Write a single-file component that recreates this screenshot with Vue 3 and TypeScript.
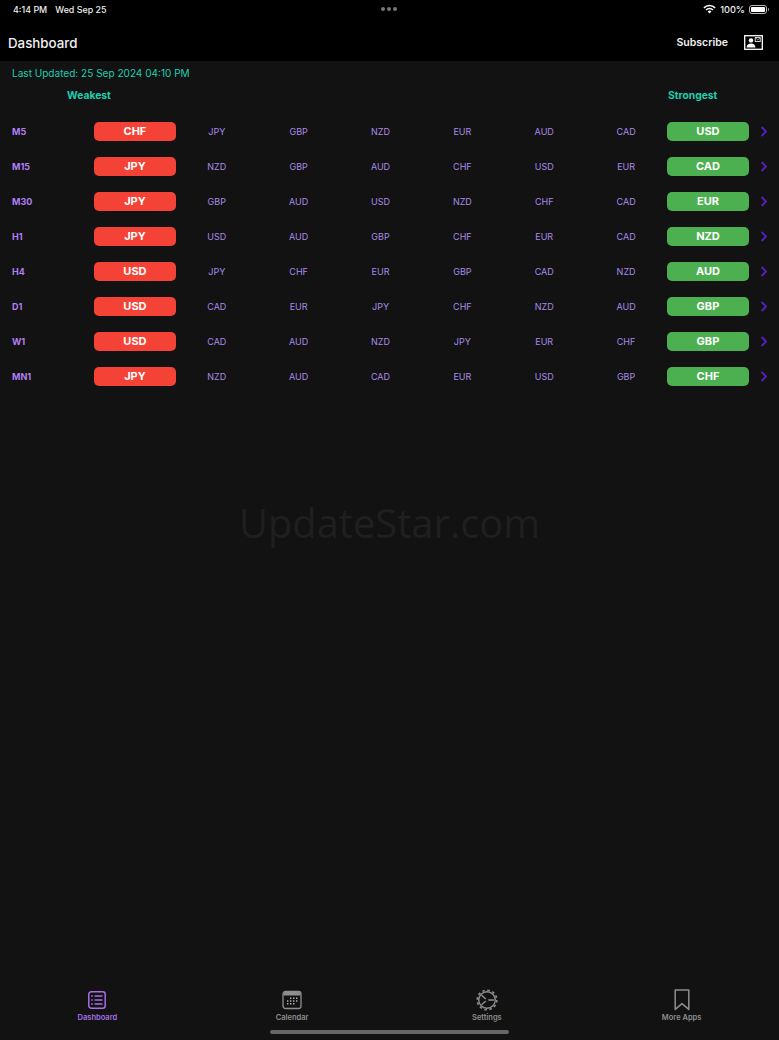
<template>
  <div class="page">
    <header class="top">
      <div class="status">
        <div class="status-left">
          <span>4:14 PM</span>
          <span>Wed Sep 25</span>
        </div>
        <div class="dots"><i></i><i></i><i></i></div>
        <div class="status-right">
          <svg class="wifi" width="13" height="10" viewBox="0 0 13 10">
            <path d="M.4 3.3a8.6 8.6 0 0 1 12.2 0l-1 1.1a7.1 7.1 0 0 0-10.2 0z" fill="#fff" />
            <path d="M2.5 5.4a5.6 5.6 0 0 1 8 0l-1 1.1a4.2 4.2 0 0 0-6 0z" fill="#fff" />
            <path d="M4.6 7.5a2.7 2.7 0 0 1 3.8 0L6.5 9.6z" fill="#fff" />
          </svg>
          <span>100%</span>
          <div class="battery"><b></b></div>
        </div>
      </div>
      <div class="nav">
        <h1>Dashboard</h1>
        <div class="nav-right">
          <span class="subscribe">Subscribe</span>
          <svg width="19" height="15" viewBox="0 0 19 15">
            <rect x=".7" y=".7" width="17.6" height="13.6" fill="none" stroke="#fff" stroke-width="1.3" />
            <circle cx="7" cy="5.4" r="2.2" fill="#fff" />
            <path d="M2.6 12.6c0-2.8 1.8-4 4.4-4s4.4 1.2 4.4 4z" fill="#fff" />
            <rect x="11.2" y="2.6" width="5" height="4" fill="none" stroke="#fff" stroke-width=".8" />
            <path d="M11.4 2.8l2.3 2.1 2.3-2.1" fill="none" stroke="#fff" stroke-width=".7" />
          </svg>
        </div>
      </div>
    </header>

    <main class="content">
      <p class="updated">Last Updated: 25 Sep 2024 04:10 PM</p>
      <div class="heads">
        <span class="head weakest">Weakest</span>
        <span class="head strongest">Strongest</span>
      </div>
      <div class="table">
        <div v-for="row in rows" :key="row.tf" class="row">
          <span class="tf">{{ row.tf }}</span>
          <span class="chip red">{{ row.list[0] }}</span>
          <span v-for="c in row.list.slice(1, 7)" :key="c" class="cur">{{ c }}</span>
          <span class="chip green">{{ row.list[7] }}</span>
          <svg class="arrow" width="8" height="11" viewBox="0 0 8 11">
            <path d="M1.6 1l4.4 4.5L1.6 10" fill="none" stroke="#5b1fc9" stroke-width="1.8" />
          </svg>
        </div>
      </div>
      <div class="watermark">UpdateStar.com</div>
    </main>

    <nav class="tabs">
      <div v-for="t in tabs" :key="t.label" class="tab" :class="{ active: t.active }">
        <svg v-if="t.icon === 'list'" width="20" height="20" viewBox="0 0 20 20">
          <rect x="1.8" y="1.8" width="16.4" height="16.4" rx="2.5" fill="none" stroke="currentColor" stroke-width="1.5" />
          <path d="M7.5 6h8M7.5 10h8M7.5 14h8" stroke="currentColor" stroke-width="1.7" />
          <path d="M4.2 6h1.6M4.2 10h1.6M4.2 14h1.6" stroke="currentColor" stroke-width="1.7" />
        </svg>
        <svg v-else-if="t.icon === 'cal'" width="20" height="20" viewBox="0 0 20 20">
          <rect x="1" y="1.5" width="18" height="17" rx="2.5" fill="none" stroke="currentColor" stroke-width="1.3" />
          <path d="M1.5 3.5a2 2 0 0 1 2-1.5h13a2 2 0 0 1 2 1.5v2h-17z" fill="currentColor" />
          <path d="M8 8.200h1.400M11 8.200h1.400M14 8.200h1.400M5 11h1.400M8 11h1.400M11 11h1.400M14 11h1.400M5 13.800h1.400M8 13.800h1.400M11 13.800h1.400" stroke="#b0b0b0" stroke-width="1.5" />
        </svg>
        <svg v-else-if="t.icon === 'gear'" width="22" height="22" viewBox="0 0 22 22">
          <circle cx="11" cy="11" r="8.300" fill="none" stroke="currentColor" stroke-width="1.4" />
          <circle cx="11" cy="11" r="9.800" fill="none" stroke="currentColor" stroke-width="1.600" stroke-dasharray="2.600 2.530" />
          <path d="M11 11L5.500 6.300M11 11L5.500 15.700M11 11h7" stroke="currentColor" stroke-width="1.500" />
          <path d="M9.400 9.700h2.200l1.100 1.300-1.100 1.300H9.400z" fill="#121212" />
        </svg>
        <svg v-else width="16" height="22" viewBox="0 0 16 22">
          <path d="M1.200 1h13.600v19.400L8 14.600l-6.800 5.800z" fill="none" stroke="currentColor" stroke-width="1.5" stroke-linejoin="round" />
        </svg>
        <span>{{ t.label }}</span>
      </div>
      <div class="home"></div>
    </nav>
  </div>
</template>

<script setup lang="ts">
interface Row { tf: string; list: string[] }
interface Tab { label: string; icon: string; active?: boolean }

const rows: Row[] = [
  { tf: 'M5', list: ['CHF', 'JPY', 'GBP', 'NZD', 'EUR', 'AUD', 'CAD', 'USD'] },
  { tf: 'M15', list: ['JPY', 'NZD', 'GBP', 'AUD', 'CHF', 'USD', 'EUR', 'CAD'] },
  { tf: 'M30', list: ['JPY', 'GBP', 'AUD', 'USD', 'NZD', 'CHF', 'CAD', 'EUR'] },
  { tf: 'H1', list: ['JPY', 'USD', 'AUD', 'GBP', 'CHF', 'EUR', 'CAD', 'NZD'] },
  { tf: 'H4', list: ['USD', 'JPY', 'CHF', 'EUR', 'GBP', 'CAD', 'NZD', 'AUD'] },
  { tf: 'D1', list: ['USD', 'CAD', 'EUR', 'JPY', 'CHF', 'NZD', 'AUD', 'GBP'] },
  { tf: 'W1', list: ['USD', 'CAD', 'AUD', 'NZD', 'JPY', 'EUR', 'CHF', 'GBP'] },
  { tf: 'MN1', list: ['JPY', 'NZD', 'AUD', 'CAD', 'EUR', 'USD', 'GBP', 'CHF'] },
]

const tabs: Tab[] = [
  { label: 'Dashboard', icon: 'list', active: true },
  { label: 'Calendar', icon: 'cal' },
  { label: 'Settings', icon: 'gear' },
  { label: 'More Apps', icon: 'mark' },
]
</script>

<style>
html, body { margin: 0; background: #121212; }
</style>

<style scoped>
.page {
  display: flex;
  flex-direction: column;
  width: 779px;
  height: 1040px;
  overflow: hidden;
  background: #121212;
  font-family: Inter, "Liberation Sans", sans-serif;
  color: #fff;
}

.top { height: 61px; background: #000; }
.status {
  display: flex; align-items: center; justify-content: space-between;
  position: relative;
  height: 18px;
  padding: 0 11px 0 13px;
  font-size: 9.2px;
  font-weight: 500;
  color: #eee;
}
.status-left { display: flex; gap: 8px; font-size: 8.9px; }
.dots { position: absolute; left: 381px; top: 7px; display: flex; gap: 2px; }
.dots i { width: 4px; height: 4px; border-radius: 50%; background: #777; }
.status-right { display: flex; align-items: center; gap: 3px; transform: translateX(-1px); }
.wifi { margin-right: 1px; }
.battery {
  width: 18px; height: 9px; margin-left: 1px;
  border: 1px solid #bbb; border-radius: 3px;
  padding: 1px; box-sizing: border-box;
  position: relative;
}
.battery::after {
  content: "";
  position: absolute; right: -3px; top: 2px;
  width: 1.5px; height: 3px;
  background: #999; border-radius: 0 1px 1px 0;
}
.battery b { display: block; height: 100%; background: #fff; border-radius: 1px; }
.nav {
  display: flex; align-items: center; justify-content: space-between;
  height: 43px;
  padding: 6px 16px 0 8px;
  box-sizing: border-box;
}
.nav h1 { margin: 0; font-size: 13.3px; font-weight: 500; color: #f2f2f2; }
.nav-right { display: flex; align-items: center; gap: 16px; }
.subscribe { font-size: 10.5px; font-weight: 600; color: #f2f2f2; }

.content { position: relative; flex: 1; }
.updated {
  margin: 0;
  padding: 6px 0 0 12px;
  height: 18px;
  line-height: 12px;
  font-size: 10.05px;
  color: #20cdb0;
}
.heads { position: relative; height: 16px; margin-top: 2px; }
.head { position: absolute; top: 0; font-size: 10.3px; font-weight: 700; color: #20cdb0; line-height: 16px; }
.weakest { left: 67px; }
.strongest { left: 668px; }
.table { padding: 11px 0 0 12px; }
.row {
  display: grid;
  grid-template-columns: 82px repeat(8, 81.86px) 25px;
  align-items: center;
  height: 35px;
}
.tf { font-size: 9px; font-weight: 700; color: #b07ef0; }
.cur { text-align: center; font-size: 9px; font-weight: 400; color: #a88ae8; }
.chip {
  height: 19.5px; line-height: 19.5px;
  border-radius: 5px;
  text-align: center;
  font-size: 11px;
  font-weight: 700;
  color: #fff;
}
.red { background: #f44336; }
.green { background: #4caf50; }
.arrow { justify-self: center; transform: translateX(3px); }

.watermark {
  position: absolute;
  left: 0; right: 0; top: 436px;
  text-align: center;
  font-family: "Open Sans", sans-serif;
  font-size: 39.8px;
  line-height: 52px;
  color: #1f1f1f;
}

.tabs { position: relative; display: flex; height: 51px; }
.tab {
  flex: 1;
  display: flex; flex-direction: column; align-items: center; justify-content: flex-start;
  gap: 2px;
  font-size: 7.5px;
  font-weight: 600;
  color: #8e8e8e;
}
.tab svg { height: 22px; }
.tab.active { color: #a86ee6; }
.home {
  position: absolute; left: 270px; bottom: 6px;
  width: 239px; height: 4px;
  border-radius: 2px;
  background: #666;
}
</style>
